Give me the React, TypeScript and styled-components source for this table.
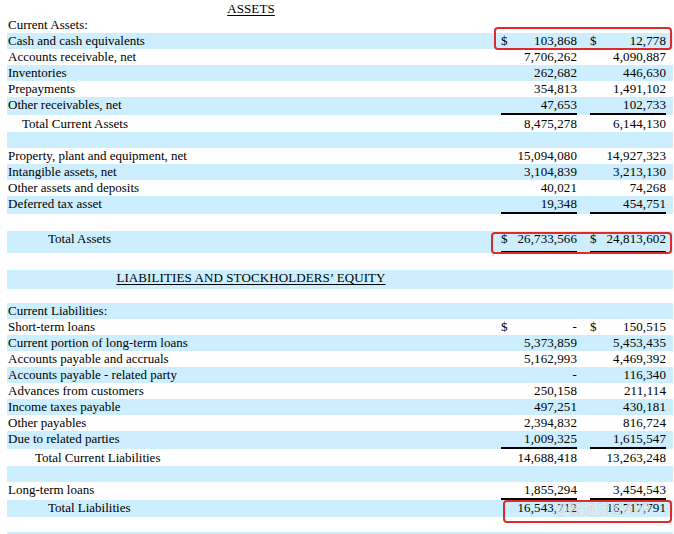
import React from "react";
import styled, { createGlobalStyle } from "styled-components";

const Global = createGlobalStyle`
  html, body { margin: 0; padding: 0; background: #fff; }
  body { font-family: "Liberation Serif", "Times New Roman", serif; font-size: 13px; color: #000; }
`;

const Page = styled.div`
  position: relative;
  width: 674px;
  height: 534px;
  overflow: hidden;
  padding-left: 7px;
  box-sizing: border-box;
`;

const Table = styled.div`
  width: 666px;
  display: flex;
  flex-direction: column;
`;

const Row = styled.div<{ $h: number; $blue?: boolean; $pad?: number }>`
  display: grid;
  grid-template-columns: 488px 6px 76px 13px 76px 7px;
  height: ${(p) => p.$h}px;
  box-sizing: border-box;
  padding-top: ${(p) => p.$pad ?? 0}px;
  background: ${(p) => (p.$blue ? "#cceeff" : "#ffffff")};
  line-height: 16px;
`;

const Label = styled.div<{ $indent?: number }>`
  padding-left: ${(p) => 1 + (p.$indent ?? 0)}px;
  white-space: nowrap;
`;

const Heading = styled.div`
  grid-column: 1 / 2;
  text-align: center;
  text-decoration: underline;
  text-underline-offset: 2px;
  letter-spacing: 0.1px;
  white-space: nowrap;
`;

const Amount = styled.div<{ $line?: boolean }>`
  display: flex;
  justify-content: space-between;
  height: 100%;
  box-sizing: border-box;
  border-bottom: ${(p) => (p.$line ? "2px solid #000" : "none")};
  white-space: nowrap;
`;

const Num = styled.span`
  margin-left: auto;
  letter-spacing: 0.1px;
`;

const Highlight = styled.div`
  position: absolute;
  border: 2.5px solid #e02a2a;
  border-radius: 4px;
  box-sizing: border-box;
`;

const Watermark = styled.div`
  position: absolute;
  left: 555px;
  top: 500px;
  font-family: "Noto Sans CJK SC", "Noto Sans", sans-serif;
  font-size: 14px;
  line-height: 16px;
  color: rgba(200, 200, 200, 0.7);
  text-shadow: 0 0 1px rgba(255, 255, 255, 0.9);
  white-space: nowrap;
  pointer-events: none;
`;

type Line = {
  kind?: "heading" | "row";
  label?: string;
  indent?: number;
  a?: string;
  b?: string;
  da?: boolean;
  db?: boolean;
  line?: boolean;
  h: number;
  pad?: number;
  blue?: boolean;
};

const lines: Line[] = [
  { kind: "heading", label: "ASSETS", h: 17, pad: 1 },
  { label: "Current Assets:", h: 16 },
  { label: "Cash and cash equivalents", a: "103,868", b: "12,778", da: true, db: true, h: 16, blue: true },
  { label: "Accounts receivable, net", a: "7,706,262", b: "4,090,887", h: 16 },
  { label: "Inventories", a: "262,682", b: "446,630", h: 16, blue: true },
  { label: "Prepayments", a: "354,813", b: "1,491,102", h: 16 },
  { label: "Other receivables, net", a: "47,653", b: "102,733", line: true, h: 18, blue: true },
  { label: "Total Current Assets", indent: 14, a: "8,475,278", b: "6,144,130", h: 17, pad: 1 },
  { h: 16, blue: true },
  { label: "Property, plant and equipment, net", a: "15,094,080", b: "14,927,323", h: 16 },
  { label: "Intangible assets, net", a: "3,104,839", b: "3,213,130", h: 16, blue: true },
  { label: "Other assets and deposits", a: "40,021", b: "74,268", h: 16 },
  { label: "Deferred tax asset", a: "19,348", b: "454,751", line: true, h: 18, blue: true },
  { h: 17 },
  { label: "Total Assets", indent: 40, a: "26,733,566", b: "24,813,602", da: true, db: true, line: true, h: 22, blue: true },
  { h: 17 },
  { kind: "heading", label: "LIABILITIES AND STOCKHOLDERS\u2019 EQUITY", h: 19, blue: true },
  { h: 14 },
  { label: "Current Liabilities:", h: 16, blue: true },
  { label: "Short-term loans", a: "-", b: "150,515", da: true, db: true, h: 16 },
  { label: "Current portion of long-term loans", a: "5,373,859", b: "5,453,435", h: 16, blue: true },
  { label: "Accounts payable and accruals", a: "5,162,993", b: "4,469,392", h: 16 },
  { label: "Accounts payable - related party", a: "-", b: "116,340", h: 16, blue: true },
  { label: "Advances from customers", a: "250,158", b: "211,114", h: 16 },
  { label: "Income taxes payable", a: "497,251", b: "430,181", h: 16, blue: true },
  { label: "Other payables", a: "2,394,832", b: "816,724", h: 16 },
  { label: "Due to related parties", a: "1,009,325", b: "1,615,547", line: true, h: 18, blue: true },
  { label: "Total Current Liabilities", indent: 27, a: "14,688,418", b: "13,263,248", h: 17, pad: 1 },
  { h: 16, blue: true },
  { label: "Long-term loans", a: "1,855,294", b: "3,454,543", line: true, h: 18 },
  { label: "Total Liabilities", indent: 40, a: "16,543,712", b: "16,717,791", h: 17, blue: true },
  { h: 15 },
  { h: 16, blue: true },
];

function Cell({ dollar, value, line }: { dollar?: boolean; value?: string; line?: boolean }) {
  return (
    <Amount $line={line}>
      {dollar ? <span>$</span> : null}
      {value ? <Num>{value}</Num> : null}
    </Amount>
  );
}

export default function App() {
  return (
    <>
      <Global />
      <Page>
        <Table>
          {lines.map((l, i) => (
            <Row key={i} $h={l.h} $blue={l.blue} $pad={l.pad}>
              {l.kind === "heading" ? (
                <Heading>{l.label}</Heading>
              ) : (
                <>
                  <Label $indent={l.indent}>{l.label ?? ""}</Label>
                  <div />
                  <Cell dollar={l.da} value={l.a} line={l.line} />
                  <div />
                  <Cell dollar={l.db} value={l.b} line={l.line} />
                  <div />
                </>
              )}
            </Row>
          ))}
        </Table>
        <Highlight style={{ left: 494, top: 27, width: 178, height: 23 }} />
        <Highlight style={{ left: 491, top: 232, width: 181, height: 22 }} />
        <Highlight style={{ left: 503, top: 500, width: 169, height: 23 }} />
        <Watermark>@智通财经APP</Watermark>
      </Page>
    </>
  );
}
